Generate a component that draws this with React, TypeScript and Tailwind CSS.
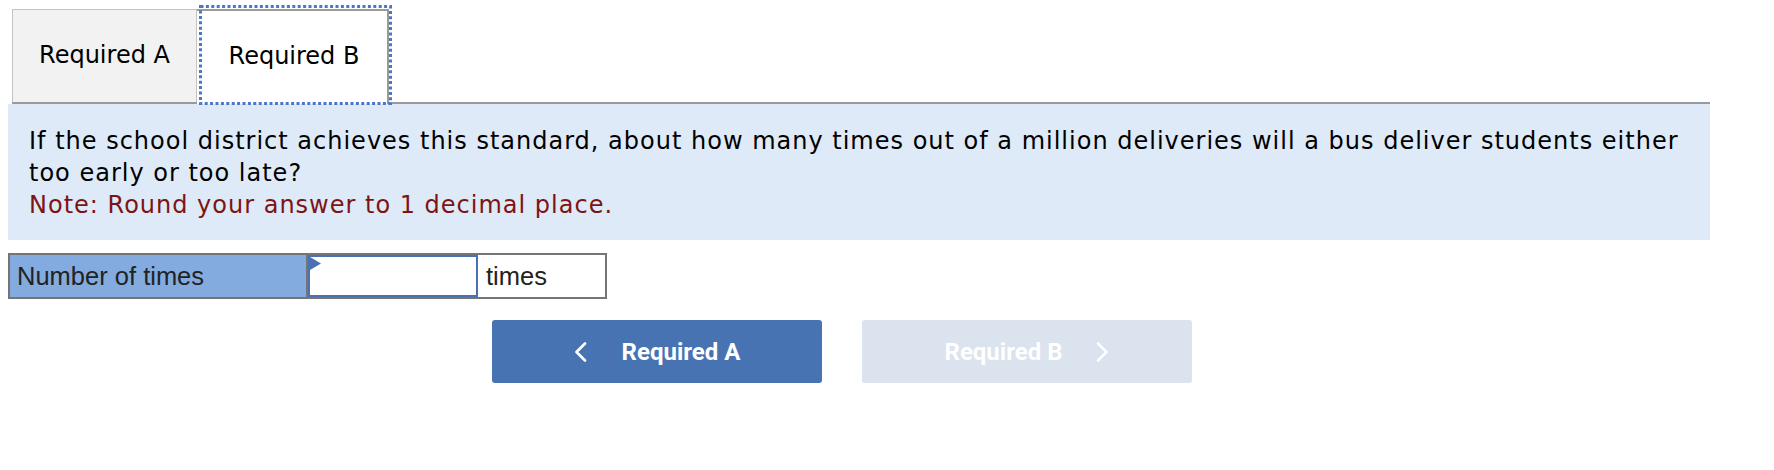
import React from "react";

function ChevronLeft() {
  return (
    <svg width="13" height="20" viewBox="0 0 13 20" fill="none">
      <polyline points="11,1.5 2.5,10 11,18.5" stroke="white" strokeWidth="2.6" strokeLinecap="round" strokeLinejoin="round" />
    </svg>
  );
}

function ChevronRight() {
  return (
    <svg width="13" height="20" viewBox="0 0 13 20" fill="none">
      <polyline points="2,1.5 10.5,10 2,18.5" stroke="white" strokeWidth="2.6" strokeLinecap="round" strokeLinejoin="round" />
    </svg>
  );
}

export default function App() {
  return (
    <div
      className="w-[1774px] h-[470px] bg-white overflow-hidden text-black"
      style={{ fontFamily: '"DejaVu Sans", Verdana, sans-serif' }}
    >
      {/* Tabs */}
      <div className="pl-[12px] pt-[9px]">
        <div className="flex items-end w-[1698px] h-[95px] border-b-2 border-[#9a9a9a]">
          <div className="w-[185px] h-[93px] bg-[#f2f2f2] border border-b-0 border-[#c4c4c4] flex items-center justify-center text-[24px] leading-none pb-[3px]">
            Required A
          </div>
          <div className="relative w-[192px] h-[95px] -mb-[2px] bg-white border-t-2 border-r-2 border-[#9a9a9a] flex items-center justify-center text-[24px] leading-none pb-[3px] pl-[4px]">
            Required B
            <svg
              className="absolute -top-[6px] left-[2px] pointer-events-none"
              width="193"
              height="100"
              viewBox="0 0 193 100"
            >
              <rect x="1.5" y="1.5" width="190" height="97" fill="none" stroke="#4a78c4" strokeWidth="3" strokeDasharray="3 2.4" />
            </svg>
          </div>
        </div>
      </div>

      {/* Question panel */}
      <div className="ml-[8px] w-[1702px] bg-[#deeaf7] pt-[21px] pb-[19px] pl-[21px] pr-[4px] text-[24px] leading-[32px] tracking-[1px]">
        <p>
          If the school district achieves this standard, about how many times out of a million deliveries will a bus deliver students either too early or too late?
        </p>
        <p className="text-[#7d1414]">Note: Round your answer to 1 decimal place.</p>
      </div>

      {/* Answer row */}
      <div
        className="mt-[13px] ml-[8px] flex h-[46px] text-[25.5px] text-[#222]"
        style={{ fontFamily: '"Liberation Sans", Arial, sans-serif' }}
      >
        <div className="w-[300px] h-full bg-[#84abdf] border-2 border-[#757575] flex items-center pl-[7px]">
          Number of times
        </div>
        <div className="w-[170px] h-full border-y-2 border-[#757575] bg-white">
          <div className="relative w-full h-full border-2 border-[#4a72b2] bg-white">
            <svg className="absolute top-0 left-0" width="12" height="13" viewBox="0 0 12 13">
              <polygon points="0,0 11,6.5 0,13" fill="#4a72b2" />
            </svg>
          </div>
        </div>
        <div className="w-[129px] h-full bg-white border-2 border-l-0 border-[#757575] flex items-center pl-[8px]">
          times
        </div>
      </div>

      {/* Navigation buttons */}
      <div
        className="mt-[21px] pl-[492px] flex gap-[40px]"
        style={{ fontFamily: 'Roboto, "Noto Sans", sans-serif' }}
      >
        <div className="w-[330px] h-[63px] rounded-[3px] bg-[#4873b3] flex items-center justify-center gap-[35px] text-white text-[24px] font-bold">
          <ChevronLeft />
          <span>Required A</span>
        </div>
        <div className="w-[330px] h-[63px] rounded-[3px] bg-[#dae3ee] flex items-center justify-center gap-[34px] text-white text-[24px] font-bold">
          <span>Required B</span>
          <ChevronRight />
        </div>
      </div>
    </div>
  );
}
